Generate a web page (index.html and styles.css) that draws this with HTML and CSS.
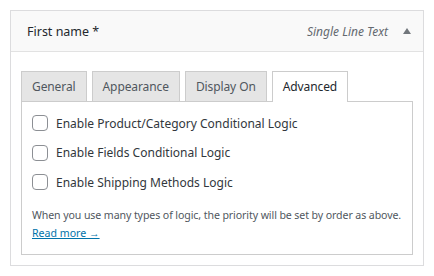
FILE: index.html
```html
<!DOCTYPE html>
<html lang="en">
<head>
    <meta charset="UTF-8">
    <title>Field settings</title>
    <link rel="stylesheet" href="styles.css">
</head>
<body>
    <div class="field-card">
        <div class="field-head">
            <span class="field-title">First name *</span>
            <span class="field-type">Single Line Text</span>
            <span class="toggle-arrow"></span>
        </div>
        <div class="field-body">
            <div class="tabs">
                <div class="tab">General</div>
                <div class="tab">Appearance</div>
                <div class="tab">Display On</div>
                <div class="tab active">Advanced</div>
            </div>
            <div class="tab-panel">
                <label class="check-row"><span class="check"></span>Enable Product/Category Conditional Logic</label>
                <label class="check-row"><span class="check"></span>Enable Fields Conditional Logic</label>
                <label class="check-row"><span class="check"></span>Enable Shipping Methods Logic</label>
                <p class="note">When you use many types of logic, the priority will be set by order as above.</p>
                <a class="read-more" href="#">Read more &rarr;</a>
            </div>
        </div>
    </div>
</body>
</html>
```

FILE: styles.css
```css
body {
    margin: 0;
    background-color: #fff;
    font-family: "Noto Sans", "Open Sans", sans-serif;
    color: #32373c;
}

.field-card {
    margin: 10px;
    border: 1px solid #dcdcde;
}

.field-head {
    display: flex;
    align-items: center;
    height: 40px;
    padding: 0 12px 0 16px;
    background-color: #f9f9f9;
    border-bottom: 1px solid #e2e2e2;
}

.field-title {
    font-size: 12.5px;
    color: #23282d;
    flex: 1;
}

.field-type {
    font-size: 12px;
    font-style: italic;
    color: #646970;
}

.toggle-arrow {
    width: 0;
    height: 0;
    margin-left: 15px;
    border-left: 4px solid transparent;
    border-right: 4px solid transparent;
    border-bottom: 6px solid #72777c;
}

.field-body {
    padding: 19px 10px 10px 10px;
}

.tabs {
    display: flex;
    gap: 5px;
}

.tab {
    height: 29px;
    line-height: 29px;
    padding: 0 10px;
    font-size: 12px;
    letter-spacing: -0.1px;
    color: #50575e;
    background-color: #e5e5e5;
    border: 1px solid #ccc;
    border-bottom: none;
}

.tab.active {
    background-color: #fff;
    color: #23282d;
    margin-bottom: -1px;
    height: 30px;
}

.tab-panel {
    border: 1px solid #ccc;
    padding: 13px 10px 13px 10px;
}

.check-row {
    display: flex;
    align-items: center;
    height: 16px;
    margin-bottom: 13.5px;
    font-size: 12px;
    color: #32373c;
}

.check {
    width: 14px;
    height: 14px;
    border: 1px solid #8c8f94;
    border-radius: 4px;
    margin-right: 8px;
    background-color: #fff;
}

.note {
    margin: 17px 0 2px 0;
    font-size: 10.6px;
    line-height: 16px;
    letter-spacing: -0.1px;
    color: #50575e;
}

.read-more {
    display: block;
    width: fit-content;
    font-size: 10.6px;
    line-height: 16px;
    color: #0073aa;
}
```
